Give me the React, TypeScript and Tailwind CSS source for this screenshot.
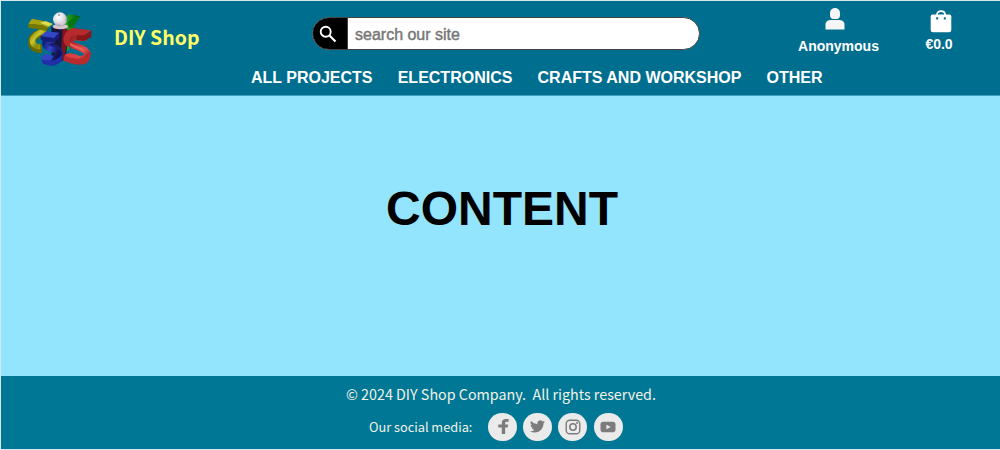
import React from "react";

const SANS = "font-['Liberation_Sans',Arial,sans-serif]";
const HUMAN = "font-['Noto_Sans_CJK_SC',sans-serif]";

function Logo() {
  return (
    <svg viewBox="0 0 240 195" className="h-[65px] w-20 shrink-0" aria-hidden="true">
      <defs>
        <linearGradient id="yellow" x1="0" y1="0" x2="1" y2="1">
          <stop offset="0" stopColor="#8b8b06" />
          <stop offset=".35" stopColor="#c9c62c" />
          <stop offset=".6" stopColor="#8a8a08" />
          <stop offset="1" stopColor="#a9a616" />
        </linearGradient>
        <linearGradient id="red" x1="0" y1="0" x2="1" y2="1">
          <stop offset="0" stopColor="#7e1517" />
          <stop offset=".45" stopColor="#c93537" />
          <stop offset=".75" stopColor="#e04a4a" />
          <stop offset="1" stopColor="#8e1e20" />
        </linearGradient>
        <linearGradient id="blue" x1="0" y1="0" x2="1" y2=".5">
          <stop offset="0" stopColor="#10186a" />
          <stop offset=".5" stopColor="#3547d2" />
          <stop offset="1" stopColor="#0e1455" />
        </linearGradient>
        <linearGradient id="green" x1="0" y1="0" x2="1" y2="0">
          <stop offset="0" stopColor="#24b324" />
          <stop offset="1" stopColor="#045408" />
        </linearGradient>
        <radialGradient id="ball" cx=".4" cy=".35" r=".68">
          <stop offset="0" stopColor="#fff" />
          <stop offset=".6" stopColor="#dcdbe4" />
          <stop offset="1" stopColor="#8d8b9e" />
        </radialGradient>
      </defs>

      <path d="M140 32 147 28 180 34 162 61 163 68 148 76V134L133 142V60Z" fill="url(#green)" />
      <path d="M143 52 165 36 180 35 162 61 148 70Z" fill="#087513" />

      <path d="M83 64H64C72 73 68 82 56 87 43 92 36 98 36 110 36 126 48 133 66 132" fill="none" stroke="#686900" strokeWidth="24" />
      <path d="M78 77C61 80 48 86 39 99 33 114 43 125 61 125" fill="none" stroke="url(#yellow)" strokeWidth="16" />
      <path d="M25 56 36 41 82 50 98 57 83 68 66 61Z" fill="#a5a313" />
      <path d="M25 56 66 61 83 68 76 78 55 73 25 68Z" fill="#777800" />
      <path d="m60 53 17-4 21 8-12 7Z" fill="#dfdc54" />

      <path d="M94 65 137 67 146 86 137 160 125 168 95 157Z" fill="#17153f" />
      <path d="M128 67 145 76 142 111 132 163 122 164Z" fill="#7b1523" />

      <path d="M199 98C176 98 165 94 155 99 145 105 149 117 160 121 184 130 204 135 201 150 197 166 170 166 133 157" fill="none" stroke="url(#red)" strokeWidth="20" />
      <path d="M131 107C130 85 144 73 158 69L214 76 193 91H171C151 91 145 102 151 112L142 125Q132 117 131 107Z" fill="#b62a2c" />
      <path d="M171 91H193L214 77V96L193 108 168 104Z" fill="#871719" />
      <path d="M132 153 162 160C191 165 203 155 213 139Q214 154 206 169C195 184 166 182 131 167Z" fill="#b92c2e" />
      <path d="M151 113Q160 120 187 128L194 138Q185 137 165 128L150 121Z" fill="#ed6159" />
      <path d="m133 151 15-7 29 6-10 8-15 1Z" fill="#d84140" />

      <path d="M105 102C83 101 75 108 80 119 86 130 117 126 117 145 117 166 94 168 72 165" fill="none" stroke="#18207c" strokeWidth="23" />
      <path d="M103 105C86 105 74 111 76 122 80 134 110 132 116 145 119 160 97 166 72 164" fill="none" stroke="url(#blue)" strokeWidth="16" />
      <path d="M62 93 79 79 118 83 102 100Z" fill="#3446c8" />
      <path d="M62 93 102 100 118 83 116 101 99 113 62 105Z" fill="#151d79" />
      <path d="M64 164 92 168Q117 163 129 146L124 170 106 181 95 183 69 176Z" fill="#202ea8" />
      <path d="m64 156 11-9 26 5-9 14-30-3Z" fill="#3544c4" />

      <ellipse cx="121" cy="65" rx="23" ry="8" fill="#d5c4cc" />
      <circle cx="120" cy="43" r="21" fill="url(#ball)" />
      <path d="M123 52Q137 46 140 49 134 62 120 63Z" fill="#eed0d8" opacity=".7" />
      <circle cx="117" cy="30" r="2.5" fill="#546385" />
    </svg>
  );
}

function SearchBar() {
  return (
    <form className="mt-4 ml-[112px] flex h-[33px] w-[388px] shrink-0 overflow-hidden rounded-full border border-[#444] bg-white" onSubmit={(e) => e.preventDefault()}>
      <button aria-label="Search" className="flex w-[35px] shrink-0 items-center justify-center border-r border-[#444] bg-black">
        <svg viewBox="0 0 18 18" className="-ml-[5px] h-[18px] w-[18px]" fill="none" stroke="#fff">
          <circle cx="6.7" cy="6.7" r="5" strokeWidth="1.9" />
          <path d="m10.5 10.5 6 6" strokeWidth="2.2" />
        </svg>
      </button>
      <input aria-label="Search our site" placeholder="search our site" className={`${SANS} min-w-0 flex-1 px-[7px] pt-[2px] text-base outline-none [-webkit-text-stroke:0.45px_#777] placeholder:text-[#777]`} />
    </form>
  );
}

function Social({ children }: { children: React.ReactNode }) {
  return <span className="flex h-[28.5px] w-[29px] items-center justify-center rounded-full bg-[#ebebeb] text-[#7c7c7c]">{children}</span>;
}

export default function App() {
  return (
    <div className={`${SANS} flex h-[450px] w-[1000px] flex-col border-t border-b border-l border-[#d8e7ec] bg-[#93e4fd]`}>
      <header className="h-[95px] shrink-0 border-b border-[#3ba1bd] bg-[#006e8e] text-white">
        <div className="flex h-[65px]">
          <div className="ml-[19px] flex pt-1"><Logo /></div>
          <h1 className={`${HUMAN} mt-[21px] ml-[14px] w-[86px] shrink-0 text-[19.5px] leading-[30px] font-bold whitespace-nowrap text-[#ffff66]`}>DIY Shop</h1>
          <SearchBar />
          <div className="mt-[7px] ml-[89px] flex w-[99px] flex-col items-center">
            <svg viewBox="0 0 20 22" className="mr-2 h-[22px] w-5" fill="#f5f5f5">
              <path d="M10 0C6.8 0 5 2.3 5 5.4V7.2C5 9.5 6.5 11 8 11H12C13.5 11 15 9.5 15 7.2V5.4C15 2.3 13.2 0 10 0Z" />
              <path d="M.5 21.5V16.4C.5 13.4 3.2 12 6.2 12H13.8C16.8 12 19.5 13.4 19.5 16.4V21.5Z" />
            </svg>
            <span className="mt-[6px] text-[14px] leading-5 font-bold">Anonymous</span>
          </div>
          <div className="mt-[9px] ml-[23px] flex w-[56px] flex-col items-center">
            <svg viewBox="0 0 22 23" className="ml-1 h-[23px] w-[22px]">
              <path d="M7 6V4.7C7 2.7 8.6 1.2 11 1.2S15 2.7 15 4.7V6" fill="none" stroke="#fff" strokeWidth="1.8" />
              <path d="M2.5 4.5H19.5Q21.3 4.5 21.3 6.3V20Q21.3 22.3 19 22.3H3Q.7 22.3.7 20V6.3Q.7 4.5 2.5 4.5Z" fill="#fff" />
              <path d="M6.2 7.2H8.2V9.5H6.2ZM13.8 7.2H15.8V9.5H13.8Z" fill="#006e8e" />
            </svg>
            <span className="mt-[1px] text-[14px] leading-5 font-bold">€0.0</span>
          </div>
        </div>
        <nav className="ml-[250px] flex gap-[25.2px] text-base leading-6 font-bold whitespace-nowrap">
          <a>ALL PROJECTS</a><a>ELECTRONICS</a><a>CRAFTS AND WORKSHOP</a><a>OTHER</a>
        </nav>
      </header>
      <main className="flex h-[280px] shrink-0 justify-center pt-[85px] pl-[3px]">
        <h2 className="text-[48px] leading-[56px] font-bold text-black">CONTENT</h2>
      </main>
      <footer className={`${HUMAN} min-h-0 flex-1 bg-[#007794] text-[#f2f2e8]`}>
        <p className="mt-[6px] ml-[345px] text-[14.3px] leading-6 whitespace-pre">© 2024 DIY Shop Company.  All rights reserved.</p>
        <div className="mt-[6px] ml-[368px] flex items-center">
          <span className="w-[119px] text-[12.75px] leading-5 whitespace-nowrap">Our social media:</span>
          <div className="flex gap-[6.2px] pt-[0.5px]">
            <Social><svg viewBox="0 0 16 18" className="h-[17px] w-4" fill="currentColor"><path d="M14 1V4H11.7Q10.3 4 10.3 5.5V7H13.5L13 10H10.3V17H6.7V10H3V7H6.7V5.2Q6.7 1 11 1Z" /></svg></Social>
            <Social><svg viewBox="0 0 24 24" className="h-[15px] w-[15px]" fill="currentColor"><path d="M23.95 4.57a10 10 0 0 1-2.82.78 4.96 4.96 0 0 0 2.16-2.73 9.9 9.9 0 0 1-3.13 1.19 4.92 4.92 0 0 0-8.38 4.49A13.98 13.98 0 0 1 1.64 3.16a4.92 4.92 0 0 0 1.52 6.57 4.9 4.9 0 0 1-2.23-.61v.06a4.92 4.92 0 0 0 3.95 4.83 5 5 0 0 1-2.22.08 4.94 4.94 0 0 0 4.6 3.42A9.87 9.87 0 0 1 0 19.54a14 14 0 0 0 7.55 2.21c9.05 0 14-7.5 14-13.99v-.63a10 10 0 0 0 2.4-2.56Z" /></svg></Social>
            <Social><svg viewBox="0 0 16 16" className="h-4 w-4" fill="none" stroke="currentColor"><rect x="1.2" y="1.2" width="13.6" height="13.6" rx="3.6" strokeWidth="1.4" /><circle cx="8" cy="8" r="3.2" strokeWidth="1.5" /><circle cx="12" cy="4" r="1" fill="currentColor" stroke="none" /></svg></Social>
            <Social><svg viewBox="0 0 16 12" className="h-3 w-4"><rect x=".5" y=".8" width="15" height="10.4" rx="2.8" fill="#7c7c7c" /><path d="m6.4 3.7 4.3 2.3-4.3 2.3Z" fill="#ebebeb" /></svg></Social>
          </div>
        </div>
      </footer>
    </div>
  );
}
